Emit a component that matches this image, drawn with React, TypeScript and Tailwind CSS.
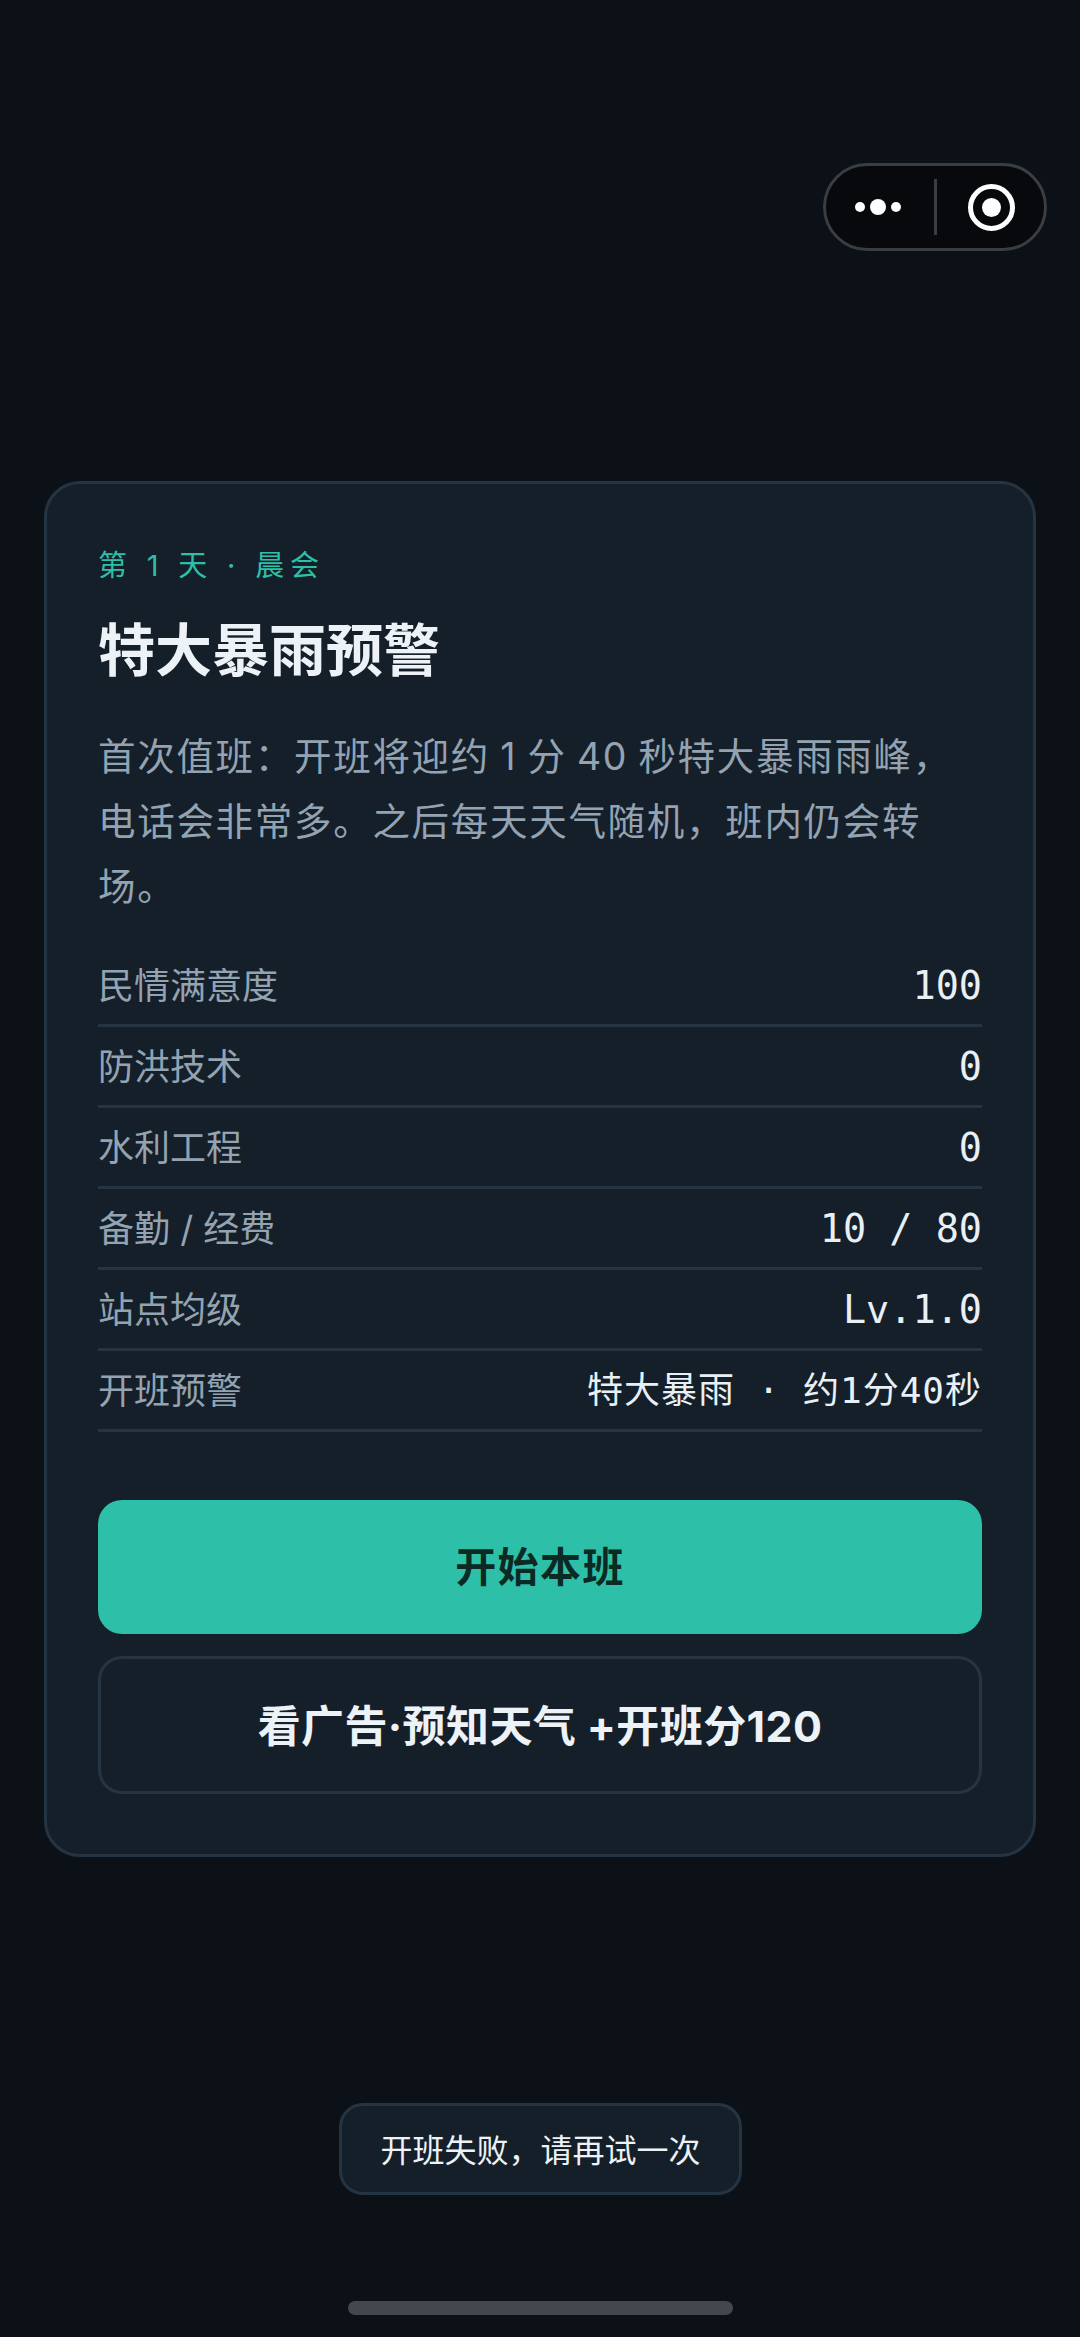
const sans = "font-['Inter','Noto_Sans_CJK_SC',sans-serif]";

const rows = [
  { label: "民情满意度", value: "100", valueSize: "text-[38.5px]" },
  { label: "防洪技术", value: "0", valueSize: "text-[38.5px]" },
  { label: "水利工程", value: "0", valueSize: "text-[38.5px]" },
  { label: "备勤 / 经费", value: "10 / 80", valueSize: "text-[38.5px]" },
  { label: "站点均级", value: "Lv.1.0", valueSize: "text-[38.5px]" },
  { label: "开班预警", value: "特大暴雨 · 约1分40秒", valueSize: "text-[36px] tracking-[1px]" },
];

function Capsule() {
  return (
    <div className="absolute left-[823px] top-[163px] flex h-[88px] w-[224px] items-center rounded-full border-[3px] border-[#3a3d41] bg-[#07090c]">
      <div className="flex w-[106px] items-center gap-[5px] pl-[29px]">
        <span className="h-[10px] w-[10px] rounded-full bg-white" />
        <span className="h-[16px] w-[16px] rounded-full bg-white" />
        <span className="h-[10px] w-[10px] rounded-full bg-white" />
      </div>
      <div className="ml-[2px] h-[56px] w-[3px] bg-[#3a3d41]" />
      <div className="ml-[31px] flex h-[47px] w-[47px] items-center justify-center rounded-full border-[5px] border-white">
        <span className="h-[19px] w-[19px] rounded-full bg-white" />
      </div>
    </div>
  );
}

function StatRow({ label, value, valueSize }: { label: string; value: string; valueSize: string }) {
  return (
    <div className="flex h-[81px] items-center justify-between border-b-[3px] border-[#253443] pt-[2px]">
      <span className="text-[36px] text-[#93a3b2]">{label}</span>
      <span className={`font-['DejaVu_Sans_Mono','Noto_Sans_CJK_SC',monospace] text-[#e9f0f5] ${valueSize}`}>{value}</span>
    </div>
  );
}

export default function App() {
  return (
    <div className={`relative flex h-[2337px] items-center overflow-hidden bg-[#0c1117] px-[44px] ${sans}`}>
      <Capsule />

      <div className="w-full rounded-[36px] border-[3px] border-[#253443] bg-[#151f29] px-[51px] pt-[62px] pb-[60px]">
        <p className="text-[29px] leading-[40px] tracking-[5.8px] text-[#2dbfa7]">第 1 天 · 晨会</p>
        <h1 className="mt-[25px] text-[57px] leading-[80px] font-bold text-[#edf2f7]">特大暴雨预警</h1>
        <p className="mt-[33px] text-[37.5px] leading-[65px] tracking-[1.7px] [word-spacing:-2px] text-[#93a3b2]">
          首次值班：开班将迎约 1 分 40 秒特大暴雨雨峰，电话会非常多。之后每天天气随机，班内仍会转场。
        </p>

        <div className="mt-[27px]">
          {rows.map((row) => (
            <StatRow key={row.label} label={row.label} value={row.value} valueSize={row.valueSize} />
          ))}
        </div>

        <button className="mt-[68px] flex h-[134px] w-full items-center justify-center rounded-[24px] bg-[#2dbfa7] pt-[3px] text-[41px] font-bold tracking-[1.4px] text-[#0b2a24]">
          开始本班
        </button>
        <button className="mt-[22px] flex h-[138px] w-full items-center justify-center rounded-[24px] border-[3px] border-[#253443] pt-[3px] text-[43px] font-bold tracking-[0.4px] text-[#edf2f7]">
          看广告·预知天气 +开班分120
        </button>
      </div>

      <div className="absolute left-[339px] top-[2103px] flex h-[92px] w-[403px] items-center justify-center rounded-[24px] border-[3px] border-[#253443] bg-[#151f29] pt-[3px] text-[32px] text-[#edf2f7]">
        开班失败，请再试一次
      </div>

      <div className="absolute left-[348px] top-[2301px] h-[14px] w-[385px] rounded-full bg-[#44474d]" />
    </div>
  );
}
